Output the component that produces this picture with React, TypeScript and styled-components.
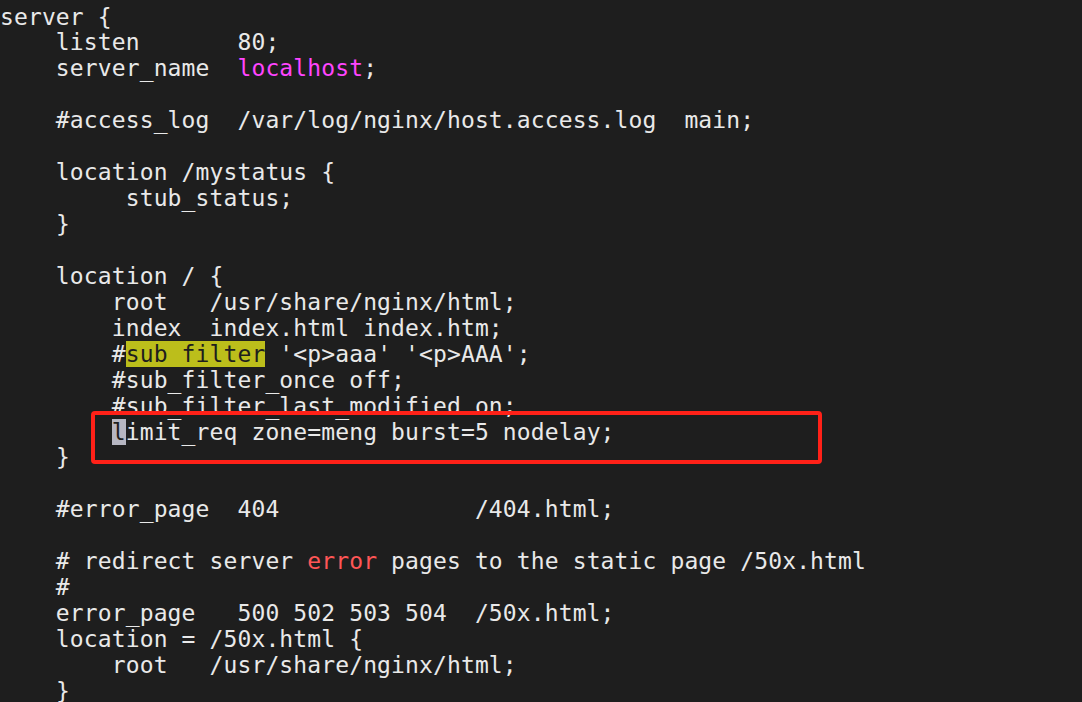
import React from "react";
import styled, { createGlobalStyle } from "styled-components";

const Global = createGlobalStyle`
  html, body { margin: 0; padding: 0; background: #1e1e1e; }
  body { width: 1082px; height: 702px; overflow: hidden; }
`;

const Terminal = styled.div`
  position: relative;
  box-sizing: border-box;
  width: 1082px;
  height: 702px;
  padding: 4.5px 0 0 0;
  background: #1e1e1e;
  color: #e9e9e9;
  font-family: "DejaVu Sans Mono", "Liberation Mono", monospace;
  font-size: 23px;
  letter-spacing: 0.12px;
  line-height: 25.94px;
  overflow: hidden;
`;

const Line = styled.div`
  white-space: pre;
  height: 25.94px;
`;

const Magenta = styled.span`
  color: #ff45ff;
`;

const RedText = styled.span`
  color: #ff5656;
`;

const Search = styled.span`
  background: #bcbe1b;
  color: #1e1e1e;
`;

const Cursor = styled.span`
  background: #b6b6c2;
  color: #1e1e1e;
`;

const Annotation = styled.div`
  position: absolute;
  left: 91px;
  top: 411px;
  width: 731px;
  height: 53px;
  box-sizing: border-box;
  border: 4.5px solid #ff2118;
  border-radius: 4px;
  pointer-events: none;
`;

export default function App() {
  return (
    <>
      <Global />
      <Terminal>
        <Line>server {"{"}</Line>
        <Line>    listen       80;</Line>
        <Line>
          {"    server_name  "}
          <Magenta>localhost</Magenta>;
        </Line>
        <Line> </Line>
        <Line>    #access_log  /var/log/nginx/host.access.log  main;</Line>
        <Line> </Line>
        <Line>    location /mystatus {"{"}</Line>
        <Line>         stub_status;</Line>
        <Line>    {"}"}</Line>
        <Line> </Line>
        <Line>    location / {"{"}</Line>
        <Line>        root   /usr/share/nginx/html;</Line>
        <Line>        index  index.html index.htm;</Line>
        <Line>
          {"        #"}
          <Search>sub_filter</Search>
          {" '<p>aaa' '<p>AAA';"}
        </Line>
        <Line>        #sub_filter_once off;</Line>
        <Line>        #sub_filter_last_modified on;</Line>
        <Line>
          {"        "}
          <Cursor>l</Cursor>
          {"imit_req zone=meng burst=5 nodelay;"}
        </Line>
        <Line>    {"}"}</Line>
        <Line> </Line>
        <Line>    #error_page  404              /404.html;</Line>
        <Line> </Line>
        <Line>
          {"    # redirect server "}
          <RedText>error</RedText>
          {" pages to the static page /50x.html"}
        </Line>
        <Line>    #</Line>
        <Line>    error_page   500 502 503 504  /50x.html;</Line>
        <Line>    location = /50x.html {"{"}</Line>
        <Line>        root   /usr/share/nginx/html;</Line>
        <Line>    {"}"}</Line>
        <Annotation />
      </Terminal>
    </>
  );
}
